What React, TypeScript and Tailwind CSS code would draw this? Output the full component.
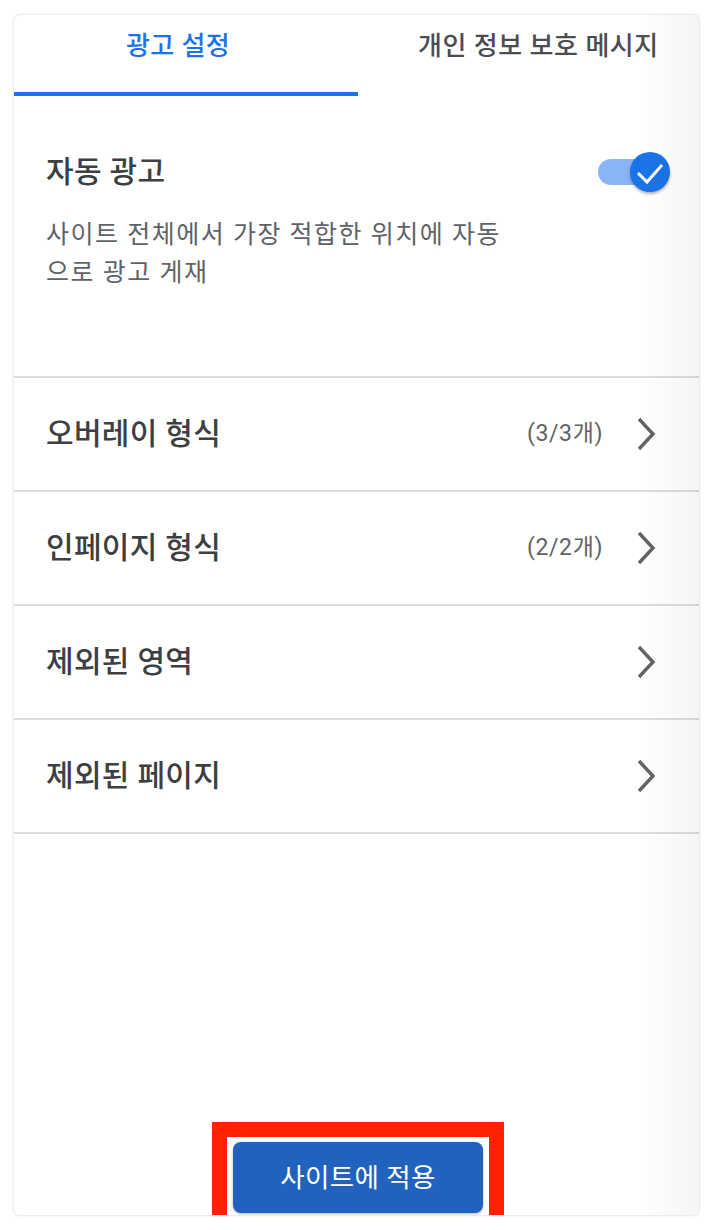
import React from "react";

const rows: { title: string; count?: string }[] = [
  { title: "오버레이 형식", count: "(3/3개)" },
  { title: "인페이지 형식", count: "(2/2개)" },
  { title: "제외된 영역" },
  { title: "제외된 페이지" },
];

function Chevron() {
  return (
    <svg width="20" height="34" viewBox="0 0 20 34" fill="none">
      <polyline
        points="3,2 17,17 3,32"
        stroke="#616366"
        strokeWidth="3.4"
        strokeLinecap="butt"
        strokeLinejoin="miter"
      />
    </svg>
  );
}

function Toggle() {
  return (
    <div className="relative w-[72px] h-[40px] shrink-0">
      <div className="absolute left-0 top-[7px] w-[60px] h-[26px] rounded-full bg-[#8ab4f8]" />
      <div className="absolute right-0 top-0 w-[40px] h-[40px] rounded-full bg-[#1a73e8] shadow-[0_2px_3px_rgba(0,0,0,0.3)] flex items-center justify-center">
        <svg width="40" height="40" viewBox="0 0 40 40" fill="none">
          <polyline points="8,21 17,30 32,13" stroke="#ffffff" strokeWidth="3" fill="none" />
        </svg>
      </div>
    </div>
  );
}

export default function App() {
  return (
    <div className="w-[714px] h-[1230px] bg-white pt-[15px] px-[14px] font-[Roboto,'Noto_Sans_CJK_KR',sans-serif] overflow-hidden">
      <div className="relative w-[685px] h-[1200px] bg-white rounded-[6px] shadow-[0_0_3px_rgba(0,0,0,0.22)] flex flex-col overflow-hidden">
        {/* Tabs */}
        <div className="flex h-[81px] shrink-0">
          <div className="w-[344px] flex flex-col">
            <div className="pt-[15px] pl-[112px] text-[26px] leading-[32px] tracking-[0.4px] font-medium text-[#1a73e8] whitespace-nowrap">
              광고 설정
            </div>
            <div className="mt-auto h-[4px] bg-[#1a73e8]" />
          </div>
          <div className="flex-1 pt-[15px] pl-[60px] text-[26px] leading-[32px] tracking-[0.5px] font-medium text-[#4a4d51] whitespace-nowrap">
            개인 정보 보호 메시지
          </div>
        </div>

        {/* Auto ads section */}
        <div className="pt-[56px] pb-[84px] shrink-0">
          <div className="flex items-center justify-between pl-[32px] pr-[29px] h-[40px]">
            <div className="text-[30px] leading-[36px] tracking-[0.3px] font-medium text-[#3c4043]">자동 광고</div>
            <Toggle />
          </div>
          <div className="mt-[24px] pl-[32px] text-[25px] leading-[38px] tracking-[1.5px] text-[#5f6368] whitespace-nowrap">
            사이트 전체에서 가장 적합한 위치에 자동
            <br />
            으로 광고 게재
          </div>
        </div>

        {/* Rows */}
        <div className="h-[2px] bg-[#dadce0] shrink-0" />
        {rows.map((r) => (
          <React.Fragment key={r.title}>
            <div className="h-[112px] flex items-center pl-[32px] pr-[43px] shrink-0">
              <div className="flex-1 text-[30px] leading-[36px] tracking-[0.3px] font-medium text-[#3c4043]">{r.title}</div>
              {r.count && (
                <div className="mr-[33px] text-[23px] leading-[28px] tracking-[0.6px] text-[#5f6368]">{r.count}</div>
              )}
              <Chevron />
            </div>
            <div className="h-[2px] bg-[#dadce0] shrink-0" />
          </React.Fragment>
        ))}

        {/* Apply button with highlight */}
        <div className="mt-auto mb-[-18px] ml-[198px] self-start border-[15px] border-[#ff2200] px-[6px] py-[5px] bg-white">
          <button className="w-[250px] h-[71px] rounded-[8px] bg-[#2062be] text-white text-[26.5px] leading-[32px] tracking-[0.4px] shadow-[0_1px_3px_rgba(0,0,0,0.3)]">
            사이트에 적용
          </button>
        </div>

        {/* right edge fade */}
        <div className="pointer-events-none absolute right-0 top-0 bottom-0 w-[60px] bg-gradient-to-r from-[rgba(0,0,0,0)] to-[rgba(0,0,0,0.04)]" />
      </div>
    </div>
  );
}
